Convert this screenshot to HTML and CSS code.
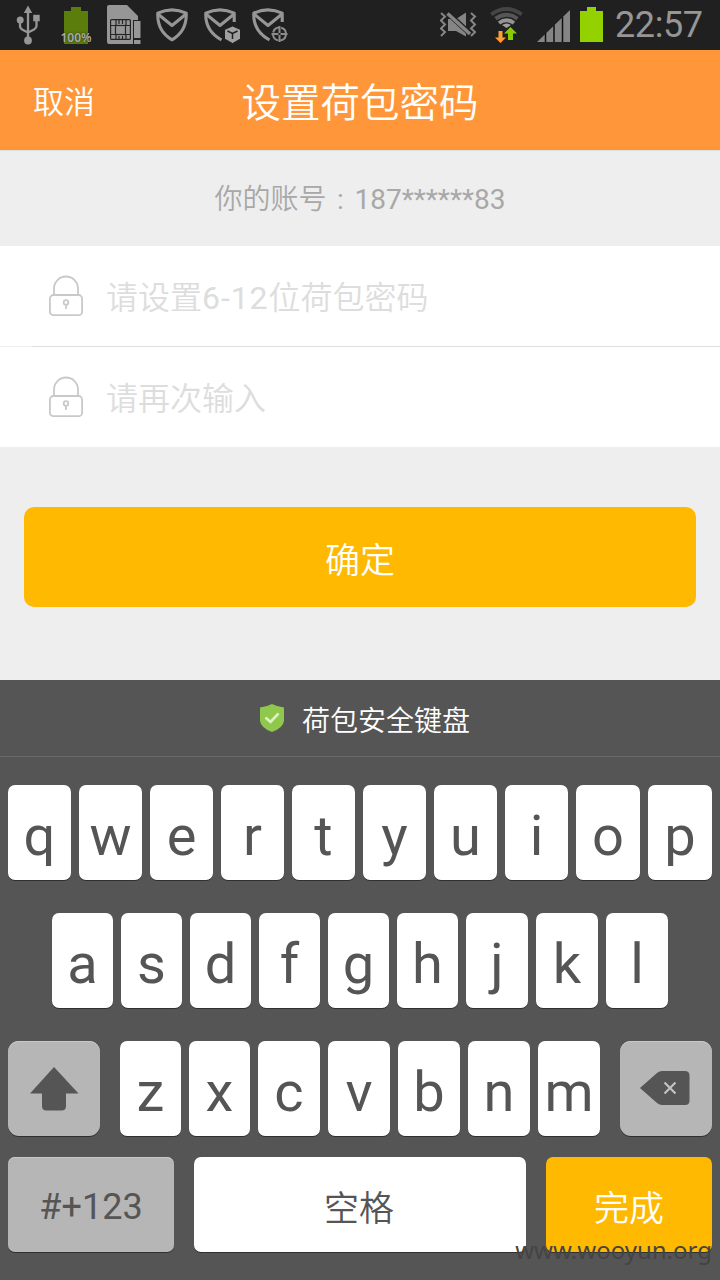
FILE: index.html
```html
<!DOCTYPE html>
<html lang="zh-CN">
<head>
<meta charset="utf-8">
<title>设置荷包密码</title>
<link rel="stylesheet" href="styles.css">
</head>
<body>
<svg class="defs" width="0" height="0" aria-hidden="true">
  <symbol id="lock" viewBox="0 0 36 42">
    <g fill="none" stroke="#c9c9c9" stroke-width="1.8">
      <path d="M6 20V13.500a12 12 0 0 1 24 0V20"/>
      <rect x="1.900" y="20" width="32.200" height="20.200" rx="3.500"/>
      <circle cx="18" cy="27.500" r="2.300"/>
      <path d="M18 29.500v4.500"/>
    </g>
  </symbol>
</svg>
<div class="screen">
  <header class="status">
    <div class="status-left">
      <svg class="usb" width="24" height="40" viewBox="16 5 24 40">
        <g fill="none" stroke="#969696" stroke-width="2.300"><path d="M28 10V38M20 20V26Q20 28.500 23 30L28 32.500M36.500 18V26Q36.500 28 34 29.500L28 32.500"/></g>
        <g fill="#969696"><path d="M28 5.500L32.200 13H23.800Z"/><circle cx="20.200" cy="20" r="3.500"/><rect x="33.200" y="14.800" width="6.500" height="6.500"/><circle cx="28" cy="40.500" r="3.900"/></g>
      </svg>
      <div class="usage">
        <svg width="32" height="40" viewBox="60 5 32 40"><path fill="#5b7d0b" d="M71 7h10v4h7v33H64V11h7z"/></svg>
        <span class="percent">100%</span>
      </div>
      <svg class="sim" width="34" height="40" viewBox="107 5 34 40">
        <path fill="#969696" d="M109 5h18l11 11v4h-5v24h-24q-2 0-2-2V7q0-2 2-2z"/>
        <rect x="133.500" y="20.500" width="7.500" height="18" fill="#969696" stroke="#202020"/><rect x="133.500" y="39.500" width="7.500" height="5" fill="#969696" stroke="#202020"/>
        <g fill="none" stroke="#252525" stroke-width="1.200"><rect x="110.600" y="19.600" width="19.800" height="19.800" rx="1"/><rect x="115.500" y="25.500" width="10" height="9"/><path d="M116 20v5M119 20v4M122.500 20v4M126 20v5M116 35v4M119 36v3M122.500 36v3M126 35v4M111 25.500h4M126 25.500h4M111 34.500h4M126 34.500h4"/></g>
      </svg>
      <svg class="shield" width="34" height="38" viewBox="155 6 34 38">
        <g fill="none" stroke="#969696" stroke-width="3.100" stroke-linejoin="round"><path d="M157.800 13.200Q172 6.500 186.200 13.200Q187 31 172 39.800Q157 31 157.800 13.200Z"/><path d="M158.500 14.500L172 25.500L185.500 14.500"/></g>
      </svg>
      <svg class="shield-box" width="38" height="38" viewBox="203 6 38 38">
        <g fill="none" stroke="#969696" stroke-width="3.100" stroke-linejoin="round"><path d="M221.500 40Q205 31 205.800 13.200Q220 6.500 234.200 13.200V22"/><path d="M206.500 14.500L220 25.500L233.500 14.500"/></g>
        <path fill="#a0a0a0" stroke="#202020" d="M232.500 26L240.500 29.500V39L232.500 43.500L224.500 39V29.500Z"/><path fill="none" stroke="#202020" stroke-width="1.500" d="M227.500 31L232.500 33.500L237.500 31M232.500 33.500V39"/>
      </svg>
      <svg class="shield-target" width="38" height="38" viewBox="251 6 38 38">
        <g fill="none" stroke="#969696" stroke-width="3.100" stroke-linejoin="round"><path d="M269.500 40Q253 31 253.800 13.200Q268 6.500 282.200 13.200V22"/><path d="M254.500 14.500L268 25.500L281.500 14.500"/></g>
        <circle cx="279.500" cy="34" r="9" fill="#202020"/><g fill="none" stroke="#8c8c8c" stroke-width="2"><circle cx="279.500" cy="34" r="6.500" stroke-dasharray="8.200 2" stroke-dashoffset="-1"/><path d="M271.500 34h7M280.500 34h7M279.500 26v7M279.500 35v7"/></g>
      </svg>
    </div>
    <div class="status-right">
      <svg class="mute" width="38" height="28" viewBox="440 11 38 28">
        <path fill="#858585" d="M448 19H456L466 12.500V36.500L456 31H448Z"/>
        <path stroke="#202020" stroke-width="5.400" d="M446 11.500L472 35.500"/><path stroke="#858585" stroke-width="3.600" d="M447.500 13.500L470 34"/>
        <g fill="none" stroke="#858585" stroke-width="2"><path d="M441 13l4 3.500-4 4 4 4-4 4 4 3.500-4 4"/><path d="M471 13l4 3.500-4 4 4 4-4 4 4 3.500-4 4"/></g>
      </svg>
      <svg class="wifi" width="34" height="38" viewBox="490 6 34 38">
        <g fill="none" stroke-width="3.900"><path stroke="#454545" d="M491.300 14.500Q506.500 3.500 521.700 14.500"/><path stroke="#565656" d="M495.500 18.700Q506.500 10.700 517.500 18.700"/><path stroke="#949494" d="M499 23Q506.500 17.500 514 23"/></g>
        <path fill="#a0a0a0" d="M502 25Q506.500 22 511 25L506.500 28Z"/>
        <path fill="#8c0" d="M510.500 27L517 33.500H513V40H508V33.500H504Z"/><path fill="#ff9c32" d="M498.500 31h4v6.500h3.500l-5.500 5.500-5.500-5.500h3.500z"/>
      </svg>
      <svg class="signal" width="34" height="34" viewBox="537 9 34 34"><path fill="#858585" d="M537 42L570 10V42Z"/><path stroke="#101010" stroke-width="1.500" d="M545.500 33V42M554 25V42M562.500 17V42"/></svg>
      <svg class="battery" width="24" height="36" viewBox="580 7 24 36"><path fill="#93d200" d="M587 7h9v4h7v31h-23V11h7z"/></svg>
      <span class="time">22:57</span>
    </div>
  </header>

  <nav class="titlebar"><span class="cancel">取消</span><h1 class="title">设置荷包密码</h1></nav>

  <main class="form">
    <p class="account">你的账号<span class="colon">:</span><span class="number">187******83</span></p>
    <div class="fields">
      <div class="field"><svg class="lock" width="36" height="42"><use href="#lock"/></svg><span>请设置<b class="range">6-12</b>位荷包密码</span></div>
      <div class="divider"></div>
      <div class="field"><svg class="lock" width="36" height="42"><use href="#lock"/></svg><span>请再次输入</span></div>
    </div>
    <div class="confirm"><span>确定</span></div>
  </main>

  <section class="keyboard">
    <div class="kb-head">
      <svg width="26" height="30" viewBox="0 0 26 30"><path fill="#8fc84d" d="M13 1Q19 4 25 4.500V18Q24 25 13 29Q2 25 1 18V4.500Q7 4 13 1Z"/><path fill="none" stroke="#ddf3bd" stroke-width="2.600" d="M6.500 14.500L11.500 19L19.500 10.500"/></svg>
      <span>荷包安全键盘</span>
    </div>
    <div class="row row1">
      <div class="key">q</div><div class="key">w</div><div class="key">e</div><div class="key">r</div><div class="key">t</div><div class="key">y</div><div class="key">u</div><div class="key">i</div><div class="key">o</div><div class="key">p</div>
    </div>
    <div class="row row2">
      <div class="key">a</div><div class="key">s</div><div class="key">d</div><div class="key">f</div><div class="key">g</div><div class="key">h</div><div class="key">j</div><div class="key">k</div><div class="key">l</div>
    </div>
    <div class="row row3">
      <div class="key grey shift"><svg width="50" height="44" viewBox="0 0 50 44"><path fill="#555" d="M25 0L49.500 26.500H37V39Q37 43.500 32.500 43.500H17.500Q13 43.500 13 39V26.500H1Z"/></svg></div>
      <div class="letters"><div class="key">z</div><div class="key">x</div><div class="key">c</div><div class="key">v</div><div class="key">b</div><div class="key">n</div><div class="key">m</div></div>
      <div class="key grey delete"><svg width="50" height="34" viewBox="0 0 50 34"><path fill="#555" d="M0 17L17 2Q19.500 0 22 0H45Q49.500 0 49.500 4.500V29.500Q49.500 34 45 34H22Q19.500 34 17 32Z"/><path stroke="#c2c2c2" stroke-width="2.200" d="M24.500 11.500L35.500 22.500M35.500 11.500L24.500 22.500"/></svg></div>
    </div>
    <div class="row row4">
      <div class="key grey symbols">#+123</div><div class="key space">空格</div><div class="key done">完成</div>
    </div>
  </section>
  <span class="watermark">www.wooyun.org</span>
</div>
</body>
</html>
```
FILE: styles.css
```css
* { box-sizing: border-box; }
body { margin: 0; font-family: Roboto, "Noto Sans CJK SC", sans-serif; font-weight: 350; }
svg { display: block; flex: none; }
.defs { position: absolute; }
.screen { position: relative; width: 720px; height: 1280px; background: #eee; overflow: hidden; }

.status { display: flex; justify-content: space-between; height: 50px; background: #202020; }
.status-left, .status-right { display: flex; align-items: flex-start; }
.status-left { padding: 5px 0 0 16px; }
.usage { position: relative; margin-left: 20px; }
.percent { position: absolute; left: 0; top: 25px; width: 32px; text-align: center; font: 600 12px/16px "Noto Sans", sans-serif; color: #aaa; text-shadow: 0 0 2px #202020; }
.sim { margin-left: 15px; }
.shield { margin: 1px 0 0 14px; }
.shield-box { margin: 1px 0 0 14px; }
.shield-target { margin: 1px 0 0 10px; }
.status-right { padding-right: 16px; }
.mute { margin-top: 11px; }
.wifi { margin: 6px 0 0 12px; }
.signal { margin: 9px 0 0 13px; }
.battery { margin: 7px 0 0 9px; }
.time { width: 89px; margin-left: 11px; font-size: 36px; line-height: 50px; font-weight: 400; letter-spacing: -0.4px; color: #969696; white-space: nowrap; }

.titlebar { display: grid; grid-template-columns: 180px 360px 180px; align-items: center; height: 101px; background: #ff973a; border-bottom: 1px solid #ddd; color: #fff; }
.cancel { padding: 5px 0 0 33px; font-size: 31px; line-height: 46px; }
.title { margin: 7px 0 0; text-align: center; font-size: 39.5px; line-height: 58px; font-weight: 350; }

.account { display: flex; justify-content: center; height: 95px; margin: 0; font-size: 28px; line-height: 98px; color: #a8a8a8; }
.colon { width: 28px; text-align: center; font-weight: 400; }
.number { font-weight: 400; }
.fields { background: #fff; }
.field { display: flex; align-items: center; height: 100px; padding-left: 48px; font-size: 32px; color: #ddd; }
.field span { margin: -2px 0 0 22px; }
.range { font-weight: 400; letter-spacing: 0.9px; }
.divider { height: 1px; background: linear-gradient(to right, #eee 32px, #ddd 32px); }
.confirm { display: flex; align-items: center; justify-content: center; height: 100px; margin: 60px 24px 0; border-radius: 10px; background: #ffb900; color: #fff; font-size: 35px; }
.form { height: 529px; }

.keyboard { height: 600px; background: #555; }
.kb-head { display: flex; align-items: center; justify-content: center; gap: 17px; height: 77px; border-bottom: 1px solid #6a6a6a; padding-left: 9px; font-size: 28px; color: #fff; }
.kb-head span { padding-top: 2px; }
.row { display: grid; height: 95px; column-gap: 8px; padding: 0 8px; }
.row1 { grid-template-columns: repeat(8, 63px) 64px 64px; margin-top: 28px; }
.row2 { grid-template-columns: repeat(6, 61px) repeat(3, 62px); margin-top: 33px; padding-left: 52px; }
.row3 { grid-template-columns: 92px 480px 92px; column-gap: 20px; margin-top: 33px; }
.row4 { grid-template-columns: 166px 332px 166px; column-gap: 20px; margin-top: 21px; }
.letters { display: grid; grid-template-columns: 61px 61px repeat(5, 62px); column-gap: 8px; }
.key { height: 95px; border-radius: 7px; background: #fff; color: #555; text-align: center; font-size: 56px; line-height: 102px; font-weight: 400; box-shadow: 0 1px 0 #303034; }
.grey { background: #b6b6b6; box-shadow: inset 0 1px #c8c8c8, 0 1px #303034; }
.shift, .delete { display: flex; justify-content: center; border-radius: 11px; }
.shift { padding-top: 26px; }
.delete { padding: 30px 3px 0 0; }
.symbols { font-size: 36px; line-height: 100px; }
.space, .done { font-size: 35px; line-height: 106px; font-weight: 350; }
.space { padding-right: 2px; }
.done { background: #ffb900; color: #fff; }
.watermark { position: absolute; right: 8px; bottom: 13px; font: 400 24px/34px "Noto Sans", sans-serif; color: #444; }
```
